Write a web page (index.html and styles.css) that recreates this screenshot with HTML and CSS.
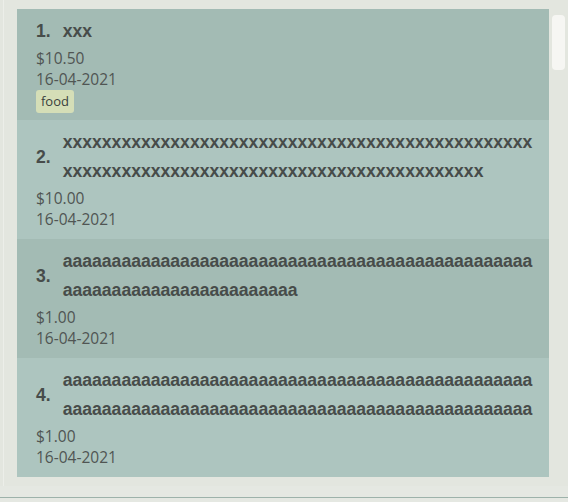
FILE: index.html
```html
<!DOCTYPE html>
<html>
<head>
<meta charset="utf-8">
<link rel="stylesheet" href="styles.css">
</head>
<body>
<div class="app">
  <div class="panel">
    <div class="list">
      <div class="row odd">
        <div class="head"><span class="num">1.</span><span class="title">xxx</span></div>
        <div class="detail">$10.50</div>
        <div class="detail">16-04-2021</div>
        <div class="tags"><span class="tag">food</span></div>
      </div>
      <div class="row even">
        <div class="head"><span class="num">2.</span><span class="title">xxxxxxxxxxxxxxxxxxxxxxxxxxxxxxxxxxxxxxxxxxxxxxxxxxxxxxxxxxxxxxxxxxxxxxxxxxxxxxxxxxxxxxxxxxx</span></div>
        <div class="detail">$10.00</div>
        <div class="detail">16-04-2021</div>
        <div class="tags"></div>
      </div>
      <div class="row odd">
        <div class="head"><span class="num">3.</span><span class="title">aaaaaaaaaaaaaaaaaaaaaaaaaaaaaaaaaaaaaaaaaaaaaaaaaaaaaaaaaaaaaaaaaaaaaaaa</span></div>
        <div class="detail">$1.00</div>
        <div class="detail">16-04-2021</div>
        <div class="tags"></div>
      </div>
      <div class="row even">
        <div class="head"><span class="num">4.</span><span class="title">aaaaaaaaaaaaaaaaaaaaaaaaaaaaaaaaaaaaaaaaaaaaaaaaaaaaaaaaaaaaaaaaaaaaaaaaaaaaaaaaaaaaaaaaaaaaaaaa</span></div>
        <div class="detail">$1.00</div>
        <div class="detail">16-04-2021</div>
        <div class="tags"></div>
      </div>
    </div>
    <div class="scrollbar"><div class="thumb"></div></div>
  </div>
  <div class="footer"><div class="footer-line"></div></div>
</div>
</body>
</html>
```
FILE: styles.css
```css
html, body {
  margin: 0;
  padding: 0;
}
body {
  width: 568px;
  height: 502px;
  overflow: hidden;
  background: #e3e6df;
  font-family: "Open Sans", "Noto Sans", sans-serif;
}
.app {
  display: flex;
  flex-direction: column;
  height: 502px;
}
.panel {
  display: flex;
  margin-left: 3px;
  border-left: 1px solid #eceee9;
  padding: 9px 0 9px 13px;
  height: 468px;
}
.list {
  width: 532px;
  display: flex;
  flex-direction: column;
}
.row {
  padding: 8px 9px 7px 19px;
}
.odd { background: #a3bbb4; }
.even { background: #adc5bf; }
.head {
  display: flex;
  align-items: center;
  color: #474c4a;
  font-family: "Liberation Sans", Arial, sans-serif;
  font-weight: 700;
  font-size: 17.6px;
  line-height: 29px;
  margin-bottom: 2px;
}
.num {
  flex: none;
  margin-right: 12px;
}
.title {
  flex: 1;
  min-width: 0;
  word-break: break-all;
}
.detail {
  font-size: 15.5px;
  line-height: 21px;
  color: #505553;
}
.tags {
  display: flex;
  min-height: 2px;
}
.tag {
  background: #d5deb7;
  color: #3a3f3d;
  font-size: 13px;
  line-height: 23px;
  padding: 0 5px;
  border-radius: 3px;
}
.scrollbar {
  width: 19px;
  display: flex;
  justify-content: center;
  padding-top: 6px;
}
.thumb {
  width: 13px;
  height: 55px;
  background: #f6f6f3;
  border-radius: 4px;
}
.footer {
  flex: 1;
  display: flex;
  flex-direction: column;
  justify-content: flex-end;
  padding-bottom: 4px;
  background: #e5e8e2;
}
.footer-line {
  height: 1px;
  background: #9db2aa;
}
```
